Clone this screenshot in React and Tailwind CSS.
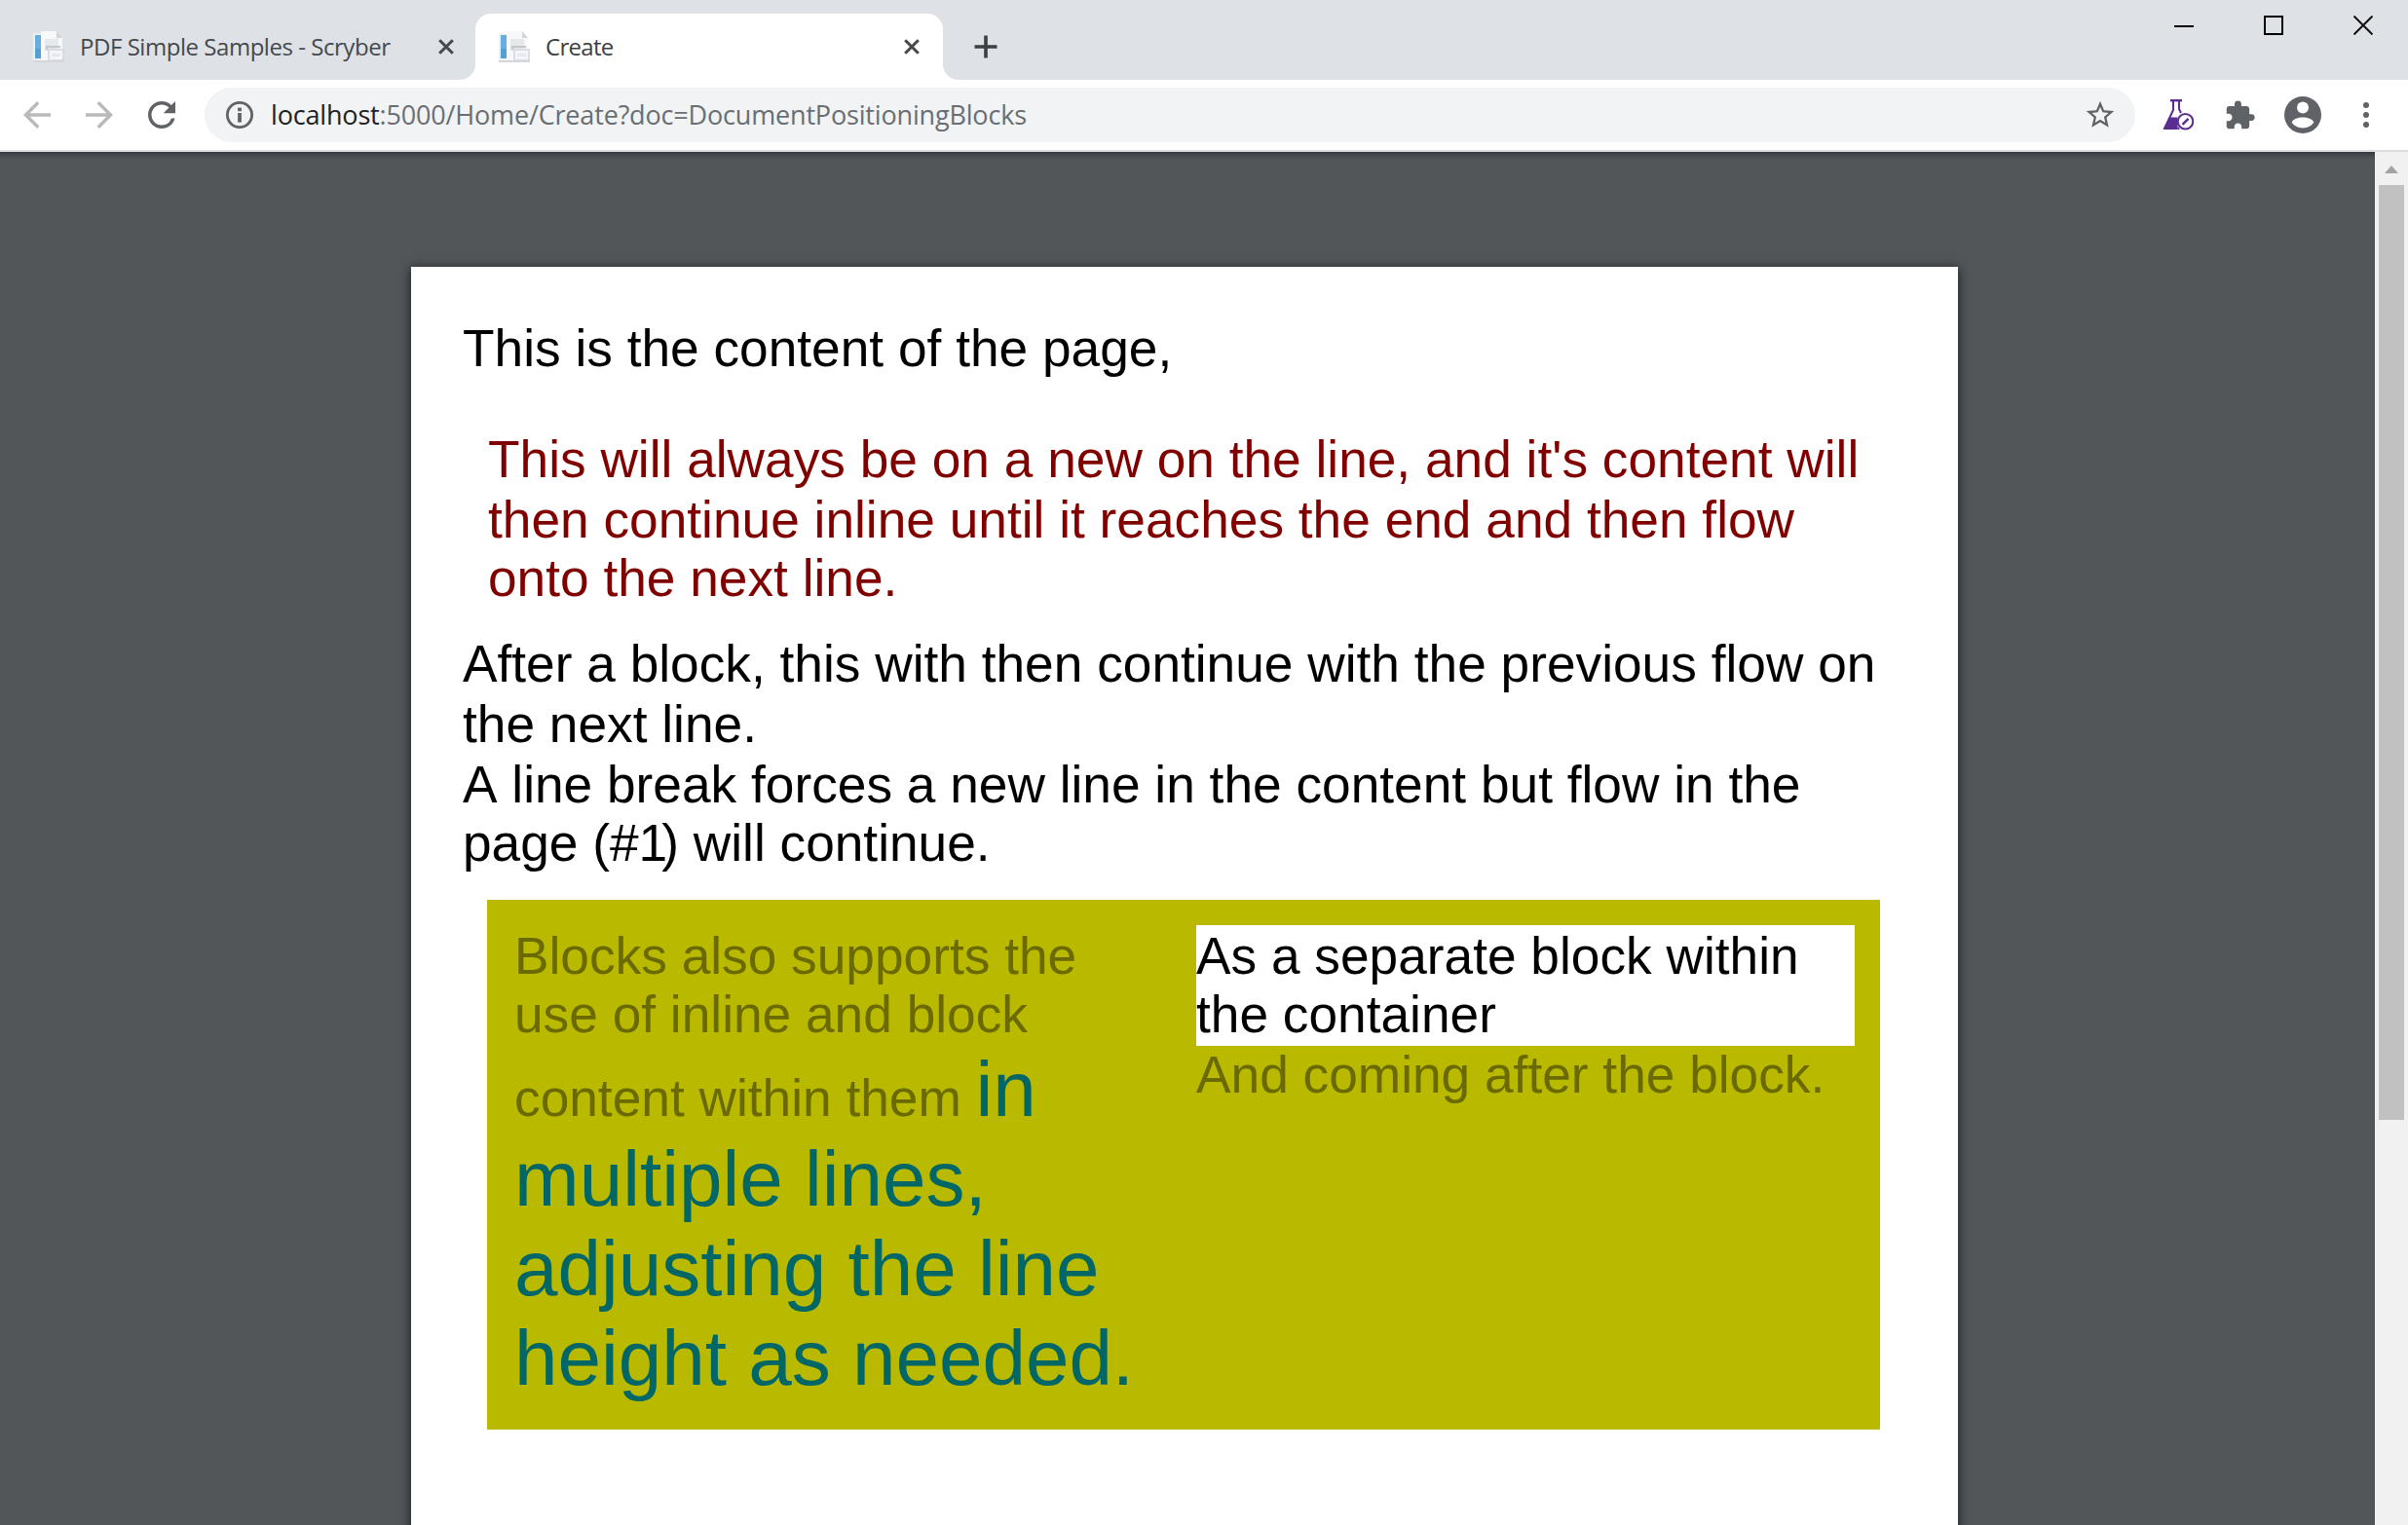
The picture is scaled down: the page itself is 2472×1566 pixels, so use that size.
import { MdArrowBack, MdArrowForward, MdRefresh, MdStarBorder, MdExtension } from 'react-icons/md';

function Favicon() {
  return (
    <svg className="h-8 w-8 shrink-0" viewBox="0 0 32 32">
      <rect x="0" y="2" width="9" height="29" fill="#eef0f2" />
      <rect x="0" y="30" width="32" height="2" fill="#d3d6da" />
      <rect x="2" y="4" width="6" height="24" fill="#66aee0" />
      <rect x="2" y="18" width="6" height="10" fill="#549fd5" />
      <path d="M8 0H24L30 7V30H8Z" fill="#f7f8f9" />
      <path d="M24 0V7H30Z" fill="#d2d4d6" />
      <rect x="12" y="8" width="14" height="12" fill="#e6e9ec" />
      <path d="M14 19V16H28" fill="none" stroke="#c3c6ca" strokeWidth="2" />
      <rect x="16" y="19" width="15" height="11" fill="#f4f6fb" stroke="#d6d8dd" strokeWidth="1.6" />
      <rect x="19" y="23" width="9" height="3" fill="#e3e8f2" />
    </svg>
  );
}

function TabClose() {
  return (
    <svg className="h-4 w-4 shrink-0" viewBox="0 0 16 16" stroke="#45494d" strokeWidth="3">
      <path d="M1.2 1.2L14.8 14.8M14.8 1.2L1.2 14.8" />
    </svg>
  );
}

function FlaskIcon() {
  return (
    <svg className="h-8 w-8 shrink-0" viewBox="0 0 32 32" fill="none" stroke="#5c2d91">
      <path d="M8 1.2H20" strokeWidth="2.4" />
      <path d="M11 2V11L2 30M17 2V10L19 14" strokeWidth="2" />
      <path d="M7 18.5H15.5V31H0.5Z" fill="#5c2d91" stroke="none" />
      <path d="M15.5 31H18L15.5 27Z" fill="#5c2d91" stroke="none" />
      <circle cx="23.5" cy="22.8" r="7.8" strokeWidth="2" fill="#ffffff" />
      <path d="M20.5 25.8L26.5 19.8" strokeWidth="2.4" />
    </svg>
  );
}

function TabStrip() {
  return (
    <div className="flex h-[82px] items-end bg-[#dee1e6]">
      <div className="flex h-[68px] w-[488px] items-center pb-[1px] pr-[22px] pl-[34px] text-[#45494d]">
        <Favicon />
        <span className="ml-[16px] flex-1 whitespace-nowrap text-[24px] leading-[32px] tracking-[-0.46px]">PDF Simple Samples - Scryber</span>
        <TabClose />
      </div>
      <div className="relative flex h-[68px] w-[480px] items-center rounded-t-[16px] bg-white pb-[1px] pr-[24px] pl-[24px] text-[#3c4043]">
        <svg className="absolute bottom-0 -left-4 h-4 w-4" viewBox="0 0 16 16">
          <path d="M16 0V16H0A16 16 0 0 0 16 0Z" fill="#ffffff" />
        </svg>
        <svg className="absolute -right-4 bottom-0 h-4 w-4" viewBox="0 0 16 16">
          <path d="M0 0V16H16A16 16 0 0 1 0 0Z" fill="#ffffff" />
        </svg>
        <Favicon />
        <span className="ml-[16px] flex-1 whitespace-nowrap text-[24px] leading-[32px] tracking-[-0.7px]">Create</span>
        <TabClose />
      </div>
      <svg className="mb-[22px] ml-[32px] h-6 w-6" viewBox="0 0 24 24" stroke="#3c4043" strokeWidth="3.6">
        <path d="M12 0.5V23.5M0.5 12H23.5" />
      </svg>
      <div className="mb-[46px] ml-auto flex items-center gap-[72px] pr-[36px]">
        <svg className="h-5 w-5" viewBox="0 0 20 20">
          <rect x="0" y="10" width="20" height="2" fill="#000000" />
        </svg>
        <svg className="h-5 w-5" viewBox="0 0 20 20">
          <rect x="1" y="1" width="18" height="18" fill="none" stroke="#000000" strokeWidth="2" />
        </svg>
        <svg className="h-5 w-5" viewBox="0 0 20 20">
          <path d="M0.5 0.5L19.5 19.5M19.5 0.5L0.5 19.5" stroke="#111111" strokeWidth="2" />
        </svg>
      </div>
    </div>
  );
}

function Toolbar() {
  return (
    <div className="flex h-[74px] items-center border-b-2 border-[#dadce0] bg-white pl-[17px]">
      <MdArrowBack className="h-[42px] w-[42px] shrink-0 text-[#bababa]" />
      <MdArrowForward className="ml-[22px] h-[42px] w-[42px] shrink-0 text-[#bababa]" />
      <MdRefresh className="ml-[22px] h-[42px] w-[42px] shrink-0 text-[#5f6368]" />
      <div className="ml-[23px] flex h-[56px] w-[1982px] shrink-0 items-center rounded-full bg-[#f1f3f4] pr-[19px] pl-[22px]">
        <svg className="h-7 w-7 shrink-0" viewBox="0 0 28 28">
          <circle cx="14" cy="14" r="12.6" fill="none" stroke="#5f6368" strokeWidth="2.8" />
          <rect x="12.1" y="6.6" width="3.8" height="3.6" fill="#5f6368" />
          <rect x="12.1" y="12" width="3.8" height="9.6" fill="#5f6368" />
        </svg>
        <span className="ml-[18px] flex-1 whitespace-nowrap text-[27px] leading-[36px] tracking-[-0.17px] text-[#6a6e73]">
          <span className="text-[#202124]">localhost</span>:5000/Home/Create?doc=DocumentPositioningBlocks
        </span>
        <MdStarBorder className="h-[34px] w-[34px] shrink-0 text-[#5f6368]" />
      </div>
      <div className="ml-[28px] flex items-center">
        <FlaskIcon />
        <MdExtension className="ml-[31px] h-[33px] w-[33px] text-[#5f6368]" />
        <svg className="ml-[29px] h-[38px] w-[38px]" viewBox="0 0 38 38">
          <circle cx="19" cy="19" r="19" fill="#5f6368" />
          <circle cx="19" cy="11.6" r="6" fill="#ffffff" />
          <path d="M7.6 26.5C9 23 14.5 21.4 19 21.4S29 23 30.4 26.5C28.2 30 24 32.4 19 32.4S9.8 30 7.6 26.5Z" fill="#ffffff" />
        </svg>
        <svg className="ml-[43px] h-[28px] w-[6px]" viewBox="0 0 6 28" fill="#5f6368">
          <circle cx="3" cy="4" r="3" />
          <circle cx="3" cy="14" r="3" />
          <circle cx="3" cy="24" r="3" />
        </svg>
      </div>
    </div>
  );
}

function DocumentPage() {
  return (
    <div className="ml-[422px] mt-[118px] h-[1400px] w-[1588px] shrink-0 bg-white pt-[53px] pl-[53px] font-['Liberation_Sans',Arial,sans-serif] text-[53.25px] leading-[61px] whitespace-nowrap text-black shadow-[0_2px_10px_1px_rgba(0,0,0,0.6)]">
      <p className="h-[114px]">This is the content of the page,</p>
      <div className="ml-[26px] h-[210px] text-[#800000]">
        <p className="h-[62px]">This will always be on a new on the line, and it's content will</p>
        <p className="h-[60px]">then continue inline until it reaches the end and then flow</p>
        <p>onto the next line.</p>
      </div>
      <p className="h-[62px]">After a block, this with then continue with the previous flow on</p>
      <p className="h-[62px]">the next line.</p>
      <p className="h-[60px] [font-kerning:none]">A line break forces a new line in the content but flow in the</p>
      <p>page (#<span className="tracking-[-6px]">1</span>) will continue.</p>
      <div className="mt-[28px] ml-[25px] flex h-[544px] w-[1430px] bg-[#b9b900] text-[#6a6a00]">
        <div className="w-[728px] pt-[27px] pl-[28px]">
          <p className="h-[60px]">Blocks also supports the</p>
          <p>use of inline and block</p>
          <div className="flex h-[92px] items-baseline">
            <span className="leading-none whitespace-pre">content within them </span>
            <span className="text-[80px] leading-[93px] text-[#006666]">in</span>
          </div>
          <div className="text-[80px] leading-[93px] text-[#006666]">
            <p className="h-[92px]">multiple lines,</p>
            <p className="h-[92px]">adjusting the line</p>
            <p>height as needed.</p>
          </div>
        </div>
        <div className="w-[676px] pt-[26px]">
          <div className="h-[124px] bg-white pt-px text-black">
            <p className="h-[60px]">As a separate block within</p>
            <p>the container</p>
          </div>
          <p className="leading-[59px]">And coming after the block.</p>
        </div>
      </div>
    </div>
  );
}

export default function App() {
  return (
    <div className="flex h-[1566px] w-[2472px] flex-col overflow-hidden bg-[#525659] font-['Open_Sans',sans-serif]">
      <TabStrip />
      <Toolbar />
      <div className="flex min-h-0 flex-1">
        <div className="w-[2438px] overflow-hidden bg-[linear-gradient(to_bottom,#34393d_0px,#43474b_3px,#525659_8px)]">
          <div className="flex">
            <DocumentPage />
          </div>
        </div>
        <div className="flex w-[34px] flex-col items-center bg-[#f1f1f1] pt-[14px]">
          <svg className="h-2 w-[14px]" viewBox="0 0 14 8">
            <path d="M7 0L14 8H0Z" fill="#a3a3a3" />
          </svg>
          <div className="mt-[12px] h-[960px] w-[26px] bg-[#c1c1c1]" />
        </div>
      </div>
    </div>
  );
}
